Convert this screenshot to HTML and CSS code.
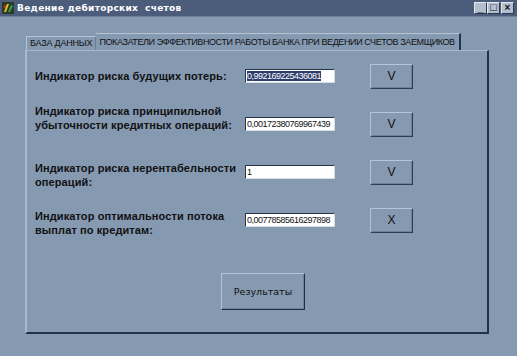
FILE: index.html
```html
<!DOCTYPE html>
<html lang="ru">
<head>
    <meta charset="UTF-8">
    <title>Ведение дебиторских счетов</title>
    <link rel="stylesheet" href="styles.css">
</head>
<body>
    <div class="window">
        <div class="titlebar">
            <svg class="app-icon" width="12" height="12" viewBox="0 0 12 12">
                <rect x="0" y="0" width="12" height="12" fill="#2d3a2a"/>
                <path d="M2 10 L5 2 L7 2 L4 10 Z" fill="#e8c020"/>
                <path d="M6 10 L9 3 L11 4 L8 10 Z" fill="#30a040"/>
                <path d="M1 5 L4 3 L4 6 Z" fill="#d04020"/>
            </svg>
            <span class="title">Ведение дебиторских&nbsp; счетов</span>
            <div class="win-buttons">
                <span class="win-btn">_</span>
                <span class="win-btn box">&#9633;</span>
                <span class="win-btn">&#215;</span>
            </div>
        </div>

        <div class="tabs">
            <div class="tab">БАЗА ДАННЫХ</div>
            <div class="tab active">ПОКАЗАТЕЛИ ЭФФЕКТИВНОСТИ РАБОТЫ БАНКА ПРИ ВЕДЕНИИ СЧЕТОВ ЗАЕМЩИКОВ</div>
        </div>

        <div class="panel">
            <div class="row">
                <div class="label">Индикатор риска будущих потерь:</div>
                <div class="field"><span class="selected">0,992169225436081</span></div>
                <button class="mark">V</button>
            </div>
            <div class="row">
                <div class="label raise">Индикатор риска принципильной<br>убыточности кредитных операций:</div>
                <div class="field">0,00172380769967439</div>
                <button class="mark">V</button>
            </div>
            <div class="row">
                <div class="label lower">Индикатор риска нерентабельности<br>операций:</div>
                <div class="field">1</div>
                <button class="mark">V</button>
            </div>
            <div class="row">
                <div class="label lower">Индикатор оптимальности потока<br>выплат по кредитам:</div>
                <div class="field">0,00778585616297898</div>
                <button class="mark">X</button>
            </div>
            <button class="results">Результаты</button>
        </div>
    </div>
</body>
</html>
```

FILE: styles.css
```css
body {
    margin: 0;
    background: #8599b1;
    font-family: "Liberation Sans", Arial, sans-serif;
}
.window {
    width: 517px;
    height: 356px;
    background: #8599b1;
}
.titlebar {
    height: 16px;
    background: #4c5d7c;
    border-bottom: 1px solid #6d7f99;
    display: flex;
    align-items: center;
    padding-left: 2px;
}
.app-icon {
    margin-right: 3px;
}
.title {
    color: #fff;
    font-family: "DejaVu Sans", sans-serif;
    font-weight: bold;
    font-size: 9px;
    letter-spacing: 0.3px;
}
.win-buttons {
    margin-left: auto;
    margin-right: 3px;
    display: flex;
}
.win-btn {
    width: 11px;
    height: 10px;
    background: #b3bfcf;
    border: 1px solid;
    border-color: #e4e9f0 #2c3b52 #2c3b52 #e4e9f0;
    color: #111;
    font-size: 10px;
    font-weight: bold;
    line-height: 9px;
    text-align: center;
}
.win-btn.box {
    margin-right: 1px;
    font-size: 11px;
}
.tabs {
    display: flex;
    align-items: flex-end;
    margin: 16px 0 0 26px;
    height: 17px;
}
.tab {
    font-size: 9px;
    color: #111;
    height: 13px;
    line-height: 13px;
    padding: 0 3px;
    border-top: 1px solid #b6c4d6;
    border-left: 1px solid #b6c4d6;
    border-right: 1px solid #6a7c96;
    letter-spacing: -0.2px;
}
.tab.active {
    height: 16px;
    line-height: 17px;
    border-left: none;
    border-right: 2px solid #22324c;
    padding: 0 4px 0 3px;
    letter-spacing: -0.4px;
}
.panel {
    width: 464px;
    height: 284px;
    margin-left: 25px;
    border-left: 2px solid #aab9cc;
    border-top: 1px solid #aab9cc;
    border-right: 2px solid #22324c;
    border-bottom: 2px solid #22324c;
    padding: 1px 0 0 8px;
    box-sizing: border-box;
}
.row {
    height: 48px;
    display: flex;
    align-items: center;
}
.label {
    width: 210px;
    font-family: "Liberation Sans", Arial, sans-serif;
    font-weight: bold;
    font-size: 11px;
    letter-spacing: 0.1px;
    line-height: 14px;
    color: #111;
    white-space: nowrap;
}
.label.raise {
    margin-bottom: 12px;
}
.label.lower {
    margin-top: 6px;
}
.field {
    width: 86px;
    height: 12px;
    background: #fff;
    border: 1px solid;
    border-color: #26344a #d8dee8 #d8dee8 #26344a;
    padding: 0 1px;
    font-size: 9px;
    line-height: 12px;
    letter-spacing: -0.5px;
    color: #111;
    overflow: hidden;
    white-space: nowrap;
}
.selected {
    background: #2c3c6c;
    color: #fff;
}
.mark {
    width: 43px;
    height: 25px;
    margin-left: 35px;
    background: #8599b1;
    border: 1px solid;
    border-color: #b5c3d6 #2e3d56 #2e3d56 #b5c3d6;
    box-shadow: inset -1px -1px 0 #6e819c;
    font-family: "Liberation Sans", Arial, sans-serif;
    font-size: 12px;
    color: #111;
    padding: 0;
}
.results {
    display: block;
    width: 84px;
    height: 37px;
    margin: 29px 0 0 186px;
    background: #8599b1;
    border: 1px solid;
    border-color: #b5c3d6 #1f2d44 #1f2d44 #b5c3d6;
    box-shadow: inset -1px -1px 0 #6e819c;
    font-family: "DejaVu Sans", sans-serif;
    font-size: 9.5px;
    color: #111;
    padding: 0;
}
```
